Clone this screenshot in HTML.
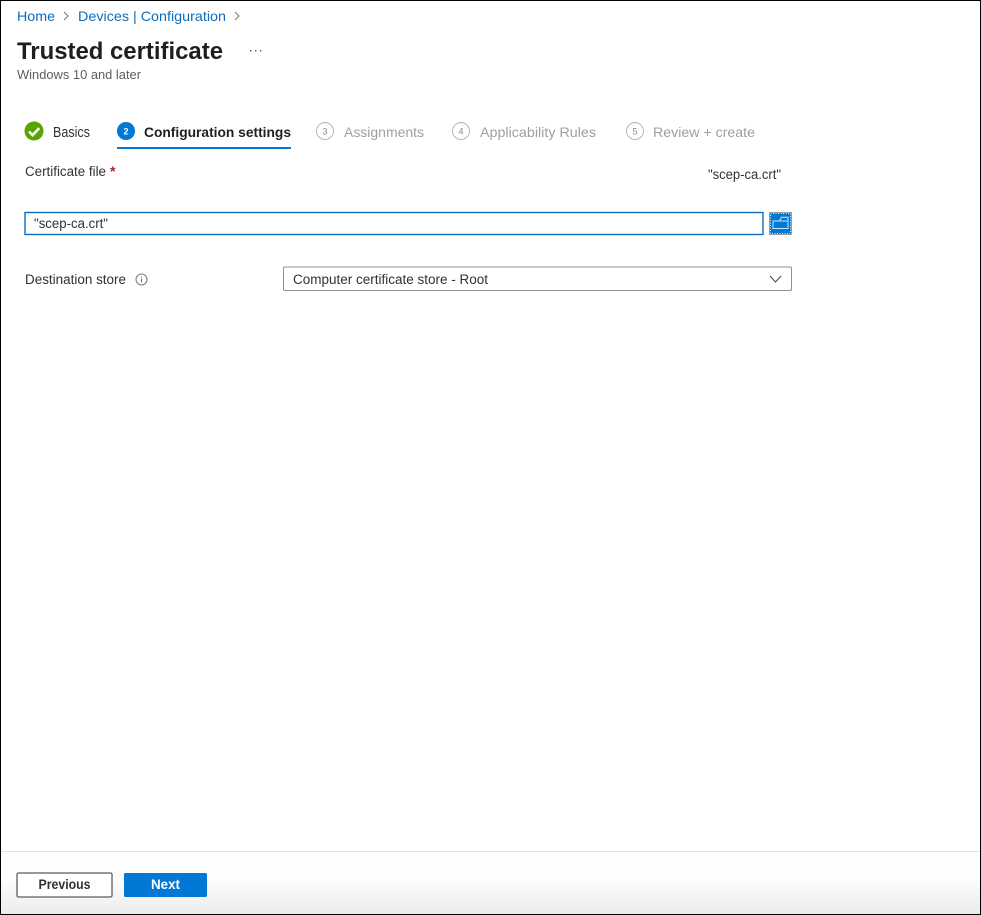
<!DOCTYPE html>
<html>
<head>
<meta charset="utf-8">
<title>Trusted certificate</title>
<style>
html,body{margin:0;padding:0;background:#fff;width:981px;height:915px;overflow:hidden}
svg{display:block;position:absolute;left:0;top:0}
text{font-family:"Liberation Sans",sans-serif;font-size:14px;fill:#323130}
.soft{filter:blur(0.3px)}
</style>
</head>
<body>
<svg width="981" height="915" viewBox="0 0 981 915" xmlns="http://www.w3.org/2000/svg">
<defs>
<linearGradient id="foot" x1="0" y1="0" x2="0" y2="1">
<stop offset="0" stop-color="#ffffff"/>
<stop offset="0.45" stop-color="#fdfdfd"/>
<stop offset="1" stop-color="#ececec"/>
</linearGradient>
</defs>
<rect width="981" height="915" fill="#fff"/>
<rect x="1" y="852" width="979" height="62" fill="url(#foot)"/>
<rect x="1" y="851" width="979" height="1" fill="#e1e1e1"/>

<g class="soft">
<!-- Breadcrumb -->
<text x="17" y="21" style="fill:#0f6cbd" textLength="38" lengthAdjust="spacingAndGlyphs">Home</text>
<path d="M64 12l4 4-4 4" fill="none" stroke="#777" stroke-width="1"/>
<text x="78" y="21" style="fill:#0f6cbd" textLength="148" lengthAdjust="spacingAndGlyphs">Devices | Configuration</text>
<path d="M235 12l4 4-4 4" fill="none" stroke="#777" stroke-width="1"/>

<!-- Title -->
<text x="17" y="59" style="font-size:24px;font-weight:bold;fill:#201f1e" textLength="206" lengthAdjust="spacingAndGlyphs">Trusted certificate</text>
<g fill="#555"><rect x="250" y="50" width="1.4" height="1.4"/><rect x="255" y="50" width="1.4" height="1.4"/><rect x="260" y="50" width="1.4" height="1.4"/></g>
<text x="17" y="79" style="font-size:12.5px;fill:#605e5c" textLength="124" lengthAdjust="spacingAndGlyphs">Windows 10 and later</text>

<!-- Tabs -->
<circle cx="34" cy="131" r="9.5" fill="#57a300"/>
<path d="M29 131.5l3.6 3.6 6.6-7" fill="none" stroke="#fff" stroke-width="2.6"/>
<text x="53" y="137" style="font-size:14.500px" textLength="37" lengthAdjust="spacingAndGlyphs">Basics</text>

<circle cx="126" cy="131" r="9" fill="#0078d4"/>
<text x="126" y="134.5" text-anchor="middle" style="font-size:9px;font-weight:bold;fill:#fff">2</text>
<text x="144" y="137" style="font-weight:bold;fill:#201f1e" textLength="147" lengthAdjust="spacingAndGlyphs">Configuration settings</text>
<rect x="117" y="147" width="174" height="2" fill="#0078d4"/>

<circle cx="325" cy="131" r="8.500" fill="none" stroke="#b5b5b5" stroke-width="1"/>
<text x="325" y="134.3" text-anchor="middle" style="font-size:9px;fill:#8a8886">3</text>
<text x="344" y="137" style="fill:#a19f9d" textLength="80" lengthAdjust="spacingAndGlyphs">Assignments</text>

<circle cx="461" cy="131" r="8.500" fill="none" stroke="#b5b5b5" stroke-width="1"/>
<text x="461" y="134.3" text-anchor="middle" style="font-size:9px;fill:#8a8886">4</text>
<text x="480" y="137" style="fill:#a19f9d" textLength="116" lengthAdjust="spacingAndGlyphs">Applicability Rules</text>

<circle cx="635" cy="131" r="8.500" fill="none" stroke="#b5b5b5" stroke-width="1"/>
<text x="635" y="134.3" text-anchor="middle" style="font-size:9px;fill:#8a8886">5</text>
<text x="653" y="137" style="fill:#a19f9d" textLength="102" lengthAdjust="spacingAndGlyphs">Review + create</text>

<!-- Certificate file -->
<text x="25" y="176" style="font-size:13.500px" textLength="81" lengthAdjust="spacingAndGlyphs">Certificate file</text>
<text x="110" y="176" style="font-size:14px;font-weight:bold;fill:#a4262c">*</text>
<text x="708" y="179" style="font-size:13.500px" textLength="73" lengthAdjust="spacingAndGlyphs">"scep-ca.crt"</text>

<rect x="25" y="212.500" width="738" height="22" fill="#fff" stroke="#0f6cbd" stroke-width="1.400"/>
<text x="34" y="228" style="font-size:13.500px" textLength="74" lengthAdjust="spacingAndGlyphs">"scep-ca.crt"</text>

<!-- Destination store -->
<text x="25" y="284" style="font-size:13.500px" textLength="101" lengthAdjust="spacingAndGlyphs">Destination store</text>
<circle cx="141.500" cy="279.500" r="5.500" fill="none" stroke="#777" stroke-width="1"/>
<rect x="141" y="278.500" width="1" height="4" fill="#666"/>
<rect x="141" y="276.500" width="1" height="1" fill="#666"/>

<rect x="283.500" y="267" width="508" height="23.500" rx="1.500" fill="#fff" stroke="#8f8f8f" stroke-width="1"/>
<text x="293" y="284" style="font-size:13.500px" textLength="195" lengthAdjust="spacingAndGlyphs">Computer certificate store - Root</text>
<path d="M770 276l5.500 6 5.500-6" fill="none" stroke="#444" stroke-width="1"/>

<!-- Footer buttons -->
<rect x="17" y="873" width="95" height="24" rx="1.500" fill="#fff" stroke="#5c5c5c" stroke-width="1.300"/>
<text x="38.500" y="889" style="font-size:13.500px;font-weight:bold;fill:#323130" textLength="52" lengthAdjust="spacingAndGlyphs">Previous</text>
<rect x="124" y="873" width="83" height="24" rx="1.500" fill="#0078d4"/>
<text x="151" y="889" style="font-size:13.500px;font-weight:bold;fill:#fff" textLength="29" lengthAdjust="spacingAndGlyphs">Next</text>
</g>

<!-- Browse button -->
<rect x="769" y="212" width="23" height="23" fill="#0078d4"/>
<rect x="769.500" y="212.500" width="22" height="22" fill="none" stroke="#9a9a9a" stroke-width="1"/>
<rect x="770.500" y="213.500" width="20" height="20" fill="none" stroke="#e8f2fb" stroke-width="1" stroke-dasharray="1 1.500"/>
<path d="M773 221h6.500l2-3.800h6.500v11.300h-15zM779.500 221h8.500" fill="none" stroke="#cfe4f7" stroke-width="1"/>

<!-- Outer frame -->
<rect x="0" y="0" width="981" height="1" fill="#000"/>
<rect x="0" y="0" width="1" height="915" fill="#000"/>
<rect x="980" y="0" width="1" height="915" fill="#000"/>
<rect x="0" y="914" width="981" height="1" fill="#000"/>
</svg>
</body>
</html>
